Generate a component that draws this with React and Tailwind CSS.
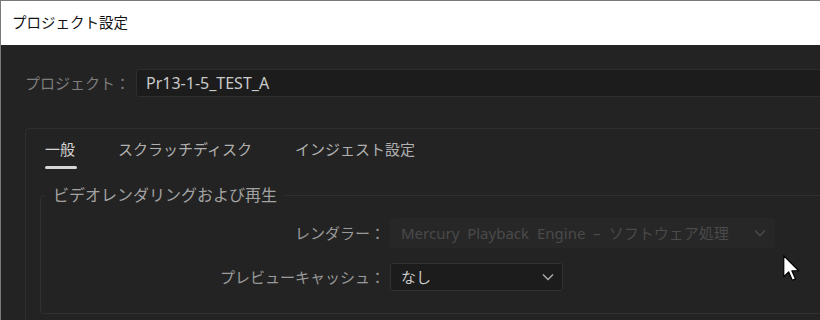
import React from "react";

const jp = { fontFamily: '"Noto Sans", "Noto Sans CJK JP", sans-serif' };

function Chevron({ color }) {
  return (
    <svg width="12" height="8" viewBox="0 0 12 8" fill="none">
      <path d="M1 1.5 L6 6.5 L11 1.5" stroke={color} strokeWidth="1.3" />
    </svg>
  );
}

export default function App() {
  return (
    <div
      className="relative w-[820px] h-[320px] overflow-hidden bg-[#232323] border-l border-t border-[#7a7a7a]"
      style={jp}
    >
      <div className="h-[44px] bg-white flex items-center pl-[11px] text-[14.5px] text-[#111]">
        プロジェクト設定
      </div>
      <div className="w-[900px] pl-[24px] pt-[24px]">
        <div className="flex items-center h-[28px]">
          <span className="text-[15px] text-[#7d7d7d] w-[111px] whitespace-nowrap">
            プロジェクト：
          </span>
          <div className="flex-1 h-[28px] bg-[#1c1c1c] border border-[#2e2e2e] rounded-[3px] flex items-center pl-[9px] text-[16px] text-[#cacaca]">
            Pr13-1-5_TEST_A
          </div>
        </div>
        <div className="mt-[31px] border border-[#2f2f2f] rounded-[4px] pl-[19px] pt-[8px] h-[220px]">
          <div className="flex text-[15px] text-[#b0b0b0]">
            <div className="flex flex-col">
              <span className="text-[#d4d4d4] leading-[24px]">一般</span>
              <div className="mt-[5px] h-[3px] w-[32px] bg-[#d6d6d6] rounded-full" />
            </div>
            <span className="ml-[41px] leading-[24px]">スクラッチディスク</span>
            <span className="ml-[43px] leading-[24px]">インジェスト設定</span>
          </div>
          <fieldset className="mt-[17px] -ml-[5px] border border-[#303030] rounded-[4px] pl-[4px] h-[128px]">
            <legend className="px-[8px] text-[16px] text-[#a2a2a2] leading-[18px]">
              ビデオレンダリングおよび再生
            </legend>
            <div className="flex flex-col gap-[15px] pt-[14px]">
              <div className="flex items-center">
                <span className="w-[340px] text-right text-[15px] text-[#9a9a9a] whitespace-nowrap">
                  レンダラー：
                </span>
                <div className="ml-[5px] w-[385px] h-[30px] bg-[#272727] rounded-[3px] flex items-center justify-between pl-[11px] pr-[9px] text-[15px] text-[#4a4a4a] whitespace-nowrap [word-spacing:4px]">
                  <span>Mercury Playback Engine – ソフトウェア処理</span>
                  <Chevron color="#4a4a4a" />
                </div>
              </div>
              <div className="flex items-center">
                <span className="w-[340px] text-right text-[15px] text-[#9a9a9a] whitespace-nowrap">
                  プレビューキャッシュ：
                </span>
                <div className="ml-[5px] w-[173px] h-[28px] bg-[#1c1c1c] border border-[#323232] rounded-[3px] flex items-center justify-between pl-[10px] pr-[8px] text-[15px] text-[#cccccc]">
                  <span>なし</span>
                  <Chevron color="#b0b0b0" />
                </div>
              </div>
            </div>
          </fieldset>
        </div>
      </div>
      <svg
        className="absolute left-[782px] top-[254px]"
        width="18"
        height="27"
        viewBox="0 0 12 18"
      >
        <path
          d="M0.5 0.5 L0.5 14.5 L3.8 11.3 L6.2 16.8 L8.3 15.9 L5.9 10.5 L10.5 10.5 Z"
          fill="#ffffff"
          stroke="#000000"
          strokeWidth="0.8"
          strokeLinejoin="round"
        />
      </svg>
    </div>
  );
}
